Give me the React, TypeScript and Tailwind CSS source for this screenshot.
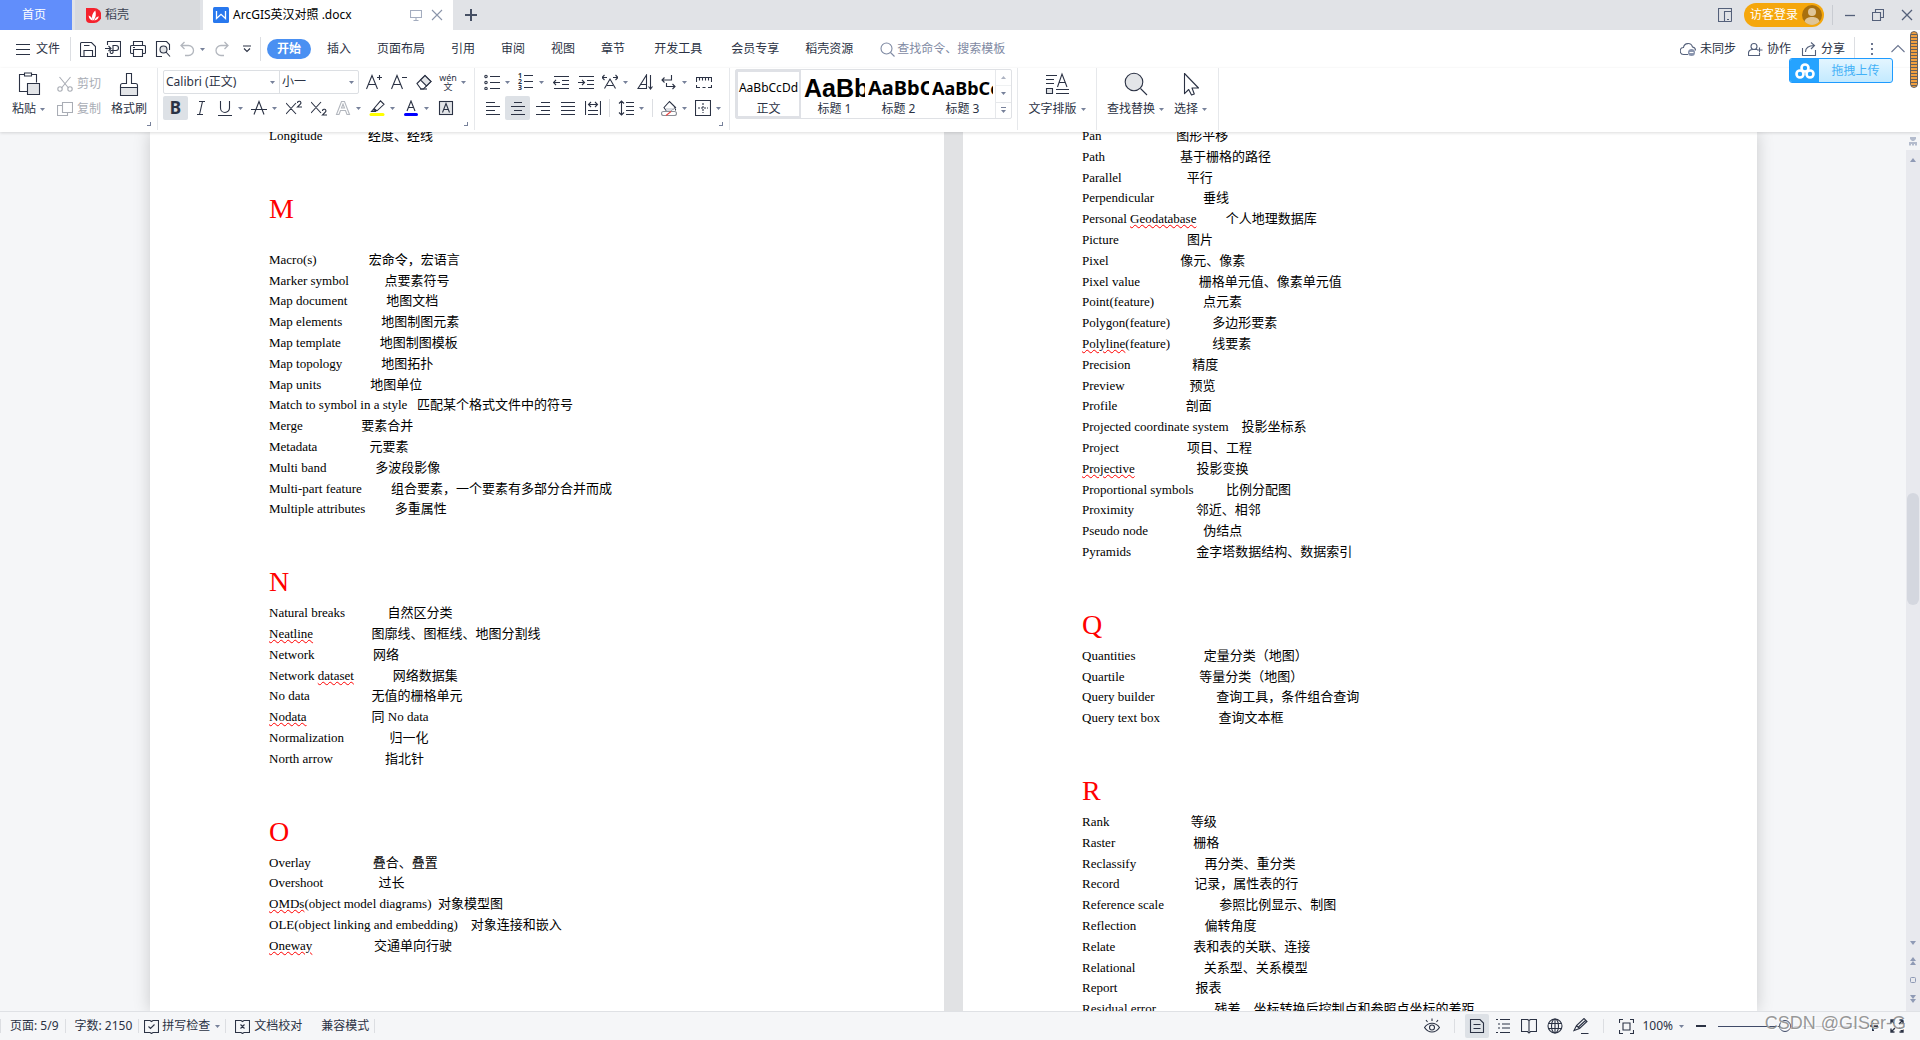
import React from "react";

type Entry = { term: string; gap: number; def: string; typo?: string };
type Section = { letter?: string; spaced?: boolean; entries: Entry[] };

const e = (term: string, gap: number, def: string, typo?: string): Entry => ({ term, gap, def, typo });

const leftPage: Section[] = [
  { entries: [e("Longitude", 14, "经度、经线")] },
  {
    letter: "M",
    spaced: true,
    entries: [
      e("Macro(s)", 16, "宏命令，宏语言"),
      e("Marker symbol", 11, "点要素符号"),
      e("Map document", 12, "地图文档"),
      e("Map elements", 12, "地图制图元素"),
      e("Map template", 12, "地图制图模板"),
      e("Map topology", 12, "地图拓扑"),
      e("Map units", 15, "地图单位"),
      e("Match to symbol in a style", 3, "匹配某个格式文件中的符号"),
      e("Merge", 18, "要素合并"),
      e("Metadata", 16, "元要素"),
      e("Multi band", 15, "多波段影像"),
      e("Multi-part feature", 9, "组合要素，一个要素有多部分合并而成"),
      e("Multiple attributes", 9, "多重属性"),
    ],
  },
  {
    letter: "N",
    entries: [
      e("Natural breaks", 13, "自然区分类"),
      e("Neatline", 18, "图廓线、图框线、地图分割线", "Neatline"),
      e("Network", 18, "网络"),
      e("Network dataset", 12, "网络数据集", "dataset"),
      e("No data", 19, "无值的栅格单元"),
      e("Nodata", 20, "同 No data", "Nodata"),
      e("Normalization", 14, "归一化"),
      e("North arrow", 16, "指北针"),
    ],
  },
  {
    letter: "O",
    entries: [
      e("Overlay", 19, "叠合、叠置"),
      e("Overshoot", 17, "过长"),
      e("OMDs(object model diagrams)", 2, "对象模型图", "OMDs"),
      e("OLE(object linking and embedding)", 4, "对象连接和嵌入"),
      e("Oneway", 19, "交通单向行驶", "Oneway"),
    ],
  },
];

const rightPage: Section[] = [
  {
    entries: [
      e("Pan", 23, "图形平移"),
      e("Path", 23, "基于栅格的路径"),
      e("Parallel", 20, "平行"),
      e("Perpendicular", 15, "垂线"),
      e("Personal Geodatabase", 9, "个人地理数据库", "Geodatabase"),
      e("Picture", 21, "图片"),
      e("Pixel", 22, "像元、像素"),
      e("Pixel value", 18, "栅格单元值、像素单元值"),
      e("Point(feature)", 15, "点元素"),
      e("Polygon(feature)", 13, "多边形要素"),
      e("Polyline(feature)", 13, "线要素", "Polyline"),
      e("Precision", 19, "精度"),
      e("Preview", 20, "预览"),
      e("Profile", 21, "剖面"),
      e("Projected coordinate system", 4, "投影坐标系"),
      e("Project", 21, "项目、工程"),
      e("Projective", 19, "投影变换", "Projective"),
      e("Proportional symbols", 10, "比例分配图"),
      e("Proximity", 19, "邻近、相邻"),
      e("Pseudo node", 17, "伪结点"),
      e("Pyramids", 20, "金字塔数据结构、数据索引"),
    ],
  },
  {
    letter: "Q",
    entries: [
      e("Quantities", 21, "定量分类（地图）"),
      e("Quartile", 23, "等量分类（地图）"),
      e("Query builder", 19, "查询工具，条件组合查询"),
      e("Query text box", 18, "查询文本框"),
    ],
  },
  {
    letter: "R",
    entries: [
      e("Rank", 25, "等级"),
      e("Raster", 24, "栅格"),
      e("Reclassify", 21, "再分类、重分类"),
      e("Record", 23, "记录，属性表的行"),
      e("Reference scale", 17, "参照比例显示、制图"),
      e("Reflection", 21, "偏转角度"),
      e("Relate", 24, "表和表的关联、连接"),
      e("Relational", 21, "关系型、关系模型"),
      e("Report", 24, "报表"),
      e("Residual error", 18, "残差，坐标转换后控制点和参照点坐标的差距"),
    ],
  },
];

function Icon({
  size = 18,
  className = "",
  children,
}: {
  size?: number;
  className?: string;
  children: React.ReactNode;
}) {
  return (
    <svg
      width={size}
      height={size}
      viewBox={`0 0 ${size} ${size}`}
      fill="none"
      stroke="currentColor"
      strokeWidth="1.1"
      aria-hidden="true"
      className={`shrink-0 ${className}`}
    >
      {children}
    </svg>
  );
}

function Caret() {
  return (
    <svg width="5" height="3" viewBox="0 0 5 3" aria-hidden="true" className="shrink-0 fill-[#77819a]">
      <path d="M0 0h5L2.500 3z" />
    </svg>
  );
}

function Tool({
  label,
  active,
  caret,
  muted,
  children,
}: {
  label: string;
  active?: boolean;
  caret?: boolean;
  muted?: boolean;
  children: React.ReactNode;
}) {
  return (
    <button
      aria-label={label}
      className={`flex h-6 items-center ${caret ? "w-[34px] pl-[2px]" : "w-[25px] justify-center"} ${
        active ? "rounded-[2px] bg-[#dde1e6]" : ""
      } ${muted ? "text-[#b3b7be]" : ""}`}
    >
      <span className="relative flex w-5 shrink-0 justify-center">{children}</span>
      {caret && (
        <span className="flex w-[10px] justify-center">
          <Caret />
        </span>
      )}
    </button>
  );
}

function Launcher() {
  return (
    <button aria-label="更多设置" className="absolute right-[6px] bottom-1 h-1 w-1 border-r border-b border-[#77819a]" />
  );
}

function BigTool({ label, caret, children, className = "" }: { label: string; caret?: boolean; children: React.ReactNode; className?: string }) {
  return (
    <button className={`flex flex-col items-center ${className}`}>
      <span className="flex h-[26px] items-center">{children}</span>
      <span className="mt-[2px] flex h-5 items-center gap-1">
        {label}
        {caret && <Caret />}
      </span>
    </button>
  );
}

function TitleBar() {
  return (
    <header className="flex h-[30px] shrink-0 items-stretch bg-[#e1e3e7]">
      <button className="w-[72px] bg-[#618efb] pr-1 text-white">首页</button>
      <button className="ml-[3px] flex w-[125px] items-center gap-1 bg-[#d8dadd] pl-[11px] text-[#3b4252]">
        <svg width="15" height="15" viewBox="0 0 15 15" aria-hidden="true">
          <path d="M0 0h8a7.500 7.500 0 0 1 0 15H4a4 4 0 0 1-4-4z" fill="#f5222d" />
          <path d="M7.500 12.500C5 10.500 5.800 5.500 9.300 2.600c1 3.500.8 7-1.800 9.900zM6.800 12.500c-2.300-.3-4-2-4.200-5 2.200.7 3.700 2.500 4.200 5zM8.300 12.500c.6-2 1.800-3.500 4.400-4.300-.2 2.500-1.900 4-4.400 4.300z" fill="#fff" />
        </svg>
        稻壳
      </button>
      <div className="ml-[3px] flex w-[250px] items-center bg-white pl-[10px]">
        <svg width="16" height="16" viewBox="0 0 16 16" aria-hidden="true">
          <rect width="16" height="16" rx="1.500" fill="#2878ee" />
          <path d="M3.500 4v7.500L8 7.300l4.500 4.200V4" fill="none" stroke="#fff" strokeWidth="1.300" />
        </svg>
        <span className="ml-1 text-black">ArcGIS英汉对照 .docx</span>
        <button aria-label="演示" className="ml-auto text-[#a4adbf]">
          <Icon size={12}>
            <path d="M.5 1.500h11v7H.5zM6 8.500v2.500M3.500 11.500h5" />
          </Icon>
        </button>
        <button aria-label="关闭标签" className="mr-[10px] ml-[9px] text-[#8b95aa]">
          <Icon size={12}>
            <path d="M1 1l10 10M11 1L1 11" />
          </Icon>
        </button>
      </div>
      <button aria-label="新建标签" className="ml-3 text-[#465064]">
        <Icon size={12}>
          <path d="M6 0v12M0 6h12" strokeWidth="2" />
        </Icon>
      </button>
      <div className="ml-auto flex items-center text-[#54607a]">
        <button aria-label="侧栏">
          <Icon size={14}>
            <path d="M6.500 13.500h-6V.5h13v13M6.500 3.500h7M6.500 3v10.500h7M9 11.500h2" />
          </Icon>
        </button>
        <button className="ml-3 flex h-6 w-20 items-center rounded-full bg-[#f5a70c] pl-[6px] text-white">
          访客登录
          <svg width="20" height="20" viewBox="0 0 20 20" className="ml-1" aria-hidden="true">
            <circle cx="10" cy="10" r="10" fill="#a8700e" />
            <circle cx="10" cy="7" r="4" fill="#dfc597" />
            <path d="M2.500 16.500c1-3.500 4-4.500 7.500-4.500s6.500 1 7.500 4.500A10 10 0 0 1 10 20a10 10 0 0 1-7.500-3.500z" fill="#dfc597" />
          </svg>
        </button>
        <span className="ml-2 h-5 w-px bg-[#c9ccd2]" />
        <button aria-label="最小化" className="ml-3">
          <Icon size={10}>
            <path d="M0 5.500h10" strokeWidth="1.300" />
          </Icon>
        </button>
        <button aria-label="还原" className="ml-[17px]">
          <Icon size={12}>
            <path d="M.5 3.500h8v8h-8zM3.500 3.500v-3h8v8h-3" />
          </Icon>
        </button>
        <button aria-label="关闭" className="mr-[7px] ml-[17px]">
          <Icon size={12}>
            <path d="M1 1l10 10M11 1L1 11" strokeWidth="1.300" />
          </Icon>
        </button>
      </div>
    </header>
  );
}

function MenuRow() {
  return (
    <div className="flex h-[38px] shrink-0 items-center bg-white pl-4">
      <button className="flex items-center gap-[6px]">
        <Icon size={14}>
          <path d="M0 2.500h14M0 7.500h14M0 12.500h14" />
        </Icon>
        文件
      </button>
      <span className="ml-[10px] h-6 w-px bg-[#dcdee2]" />
      <div className="flex items-center pl-1">
        <Tool label="保存">
          <Icon size={16}>
            <path d="M.5 2.500v13h15V5.500l-4-4h-10a1 1 0 0 0-1 1zM4 15.500v-6h8.500v6M4 4.500h5.500" />
          </Icon>
        </Tool>
        <Tool label="输出为PDF">
          <Icon size={16}>
            <path d="M2.500 4V.5h13v15h-13V12M0 7.500h5.500M3.500 5l2.500 2.500L3.500 10M8 12V4.500h3a2 2 0 0 1 0 5H6.500a1.500 1.500 0 1 0 1.500 2" />
          </Icon>
        </Tool>
        <Tool label="打印">
          <Icon size={16}>
            <path d="M3.500 4.500v-4h9v4M3.500 12.500h-2a1 1 0 0 1-1-1v-6a1 1 0 0 1 1-1h13a1 1 0 0 1 1 1v6a1 1 0 0 1-1 1h-2M3.500 8.500h9v7h-9zM3 6.500h2" />
          </Icon>
        </Tool>
        <Tool label="打印预览">
          <Icon size={16}>
            <path d="M7 15.500H1.500V.5h10l3 3V9" />
            <circle cx="8.500" cy="8.500" r="3.500" fill="#e3e5e8" />
            <path d="M11 11l4 4.500" />
          </Icon>
        </Tool>
        <Tool label="撤销" caret muted>
          <Icon size={16}>
            <path d="M5.500 1L2 4.500 5.500 8M2 4.500h7.500a5 5 0 0 1 0 10H6" strokeWidth="1.300" />
          </Icon>
        </Tool>
        <Tool label="恢复" muted>
          <Icon size={16}>
            <path d="M10.500 1L14 4.500 10.500 8M14 4.500H7a5 5 0 0 0 0 10h3" strokeWidth="1.300" />
          </Icon>
        </Tool>
        <Tool label="自定义快速访问工具栏">
          <Icon size={8}>
            <path d="M0 1h8M1 3.500l3 3 3-3" />
          </Icon>
        </Tool>
      </div>
      <span className="ml-px h-6 w-px bg-[#dcdee2]" />
      <nav className="flex items-center pl-[6px]">
        <button className="h-5 rounded-full bg-[#4a90f2] px-[10px] font-bold text-white">开始</button>
        {["插入", "页面布局", "引用", "审阅", "视图", "章节"].map((t) => (
          <button key={t} className="px-[13px] nth-2:pl-4">
            {t}
          </button>
        ))}
        {["开发工具", "会员专享"].map((t) => (
          <button key={t} className="pr-[13px] pl-4">
            {t}
          </button>
        ))}
        <button className="px-[13px]">稻壳资源</button>
      </nav>
      <label className="ml-[14px] flex items-center gap-[2px] text-[#7f8aa3]">
        <Icon size={15}>
          <circle cx="6.500" cy="6.500" r="5.500" />
          <path d="M10.500 10.500l4 4" />
        </Icon>
        <input
          aria-label="查找命令、搜索模板"
          placeholder="查找命令、搜索模板"
          className="w-[120px] bg-transparent outline-none placeholder:text-[#7f8aa3]"
        />
      </label>
      <div className="ml-auto flex items-center">
        <button className="flex items-center gap-1">
          <Icon size={16} className="text-[#54607a]">
            <path d="M8 13.500H4a3.500 3.500 0 0 1-.5-7 4.600 4.600 0 0 1 9-.5 3.500 3.500 0 0 1 3 3.500" />
            <circle cx="11.500" cy="11.500" r="3.500" fill="#8893ad" stroke="none" />
            <path d="M9.500 11.500h4" stroke="#fff" />
          </Icon>
          未同步
        </button>
        <button className="ml-3 flex items-center gap-1">
          <Icon size={15} className="text-[#54607a]">
            <circle cx="6" cy="4.500" r="3" />
            <path d="M9.500 7.500H5c-3 0-4.500 1.500-4.500 3.500v2.500h11V11M9 8h5.500M11.500 5.500v5" />
          </Icon>
          协作
        </button>
        <button className="ml-[10px] flex items-center gap-1">
          <Icon size={16} className="text-[#54607a]">
            <path d="M1.500 7v7.500h13V9M4.500 11c0-4 3-6.500 8.500-6.500M10 1.500l3.500 3L10 8" />
          </Icon>
          分享
        </button>
        <span className="ml-[9px] h-6 w-px bg-[#dcdee2]" />
        <button aria-label="更多" className="ml-4 grid gap-[3px]">
          <i className="size-[2px] bg-[#6b7690]" />
          <i className="size-[2px] bg-[#6b7690]" />
          <i className="size-[2px] bg-[#6b7690]" />
        </button>
        <button aria-label="收起功能区" className="mr-[15px] ml-[18px] text-[#6b7690]">
          <Icon size={14}>
            <path d="M.5 10L7 3.500l6.500 6.500" />
          </Icon>
        </button>
      </div>
    </div>
  );
}

function FontGroup() {
  return (
    <div className="relative h-[62px] w-[317px] border-r border-[#e6e8eb] pl-[5px]">
      <div className="flex h-7 items-center">
        <div className="mr-[2px] flex h-6 rounded-[2px] border border-[#dcdfe3]">
          <div className="relative flex w-[115px] items-center">
            <select aria-label="字体" className="w-full appearance-none bg-transparent pl-[2px] outline-none">
              <option>Calibri (正文)</option>
            </select>
            <span className="pointer-events-none absolute right-1">
              <Caret />
            </span>
          </div>
          <div className="relative flex w-[79px] items-center border-l border-[#dcdfe3]">
            <select aria-label="字号" className="w-full appearance-none bg-transparent pl-[2px] outline-none">
              <option>小一</option>
            </select>
            <span className="pointer-events-none absolute right-1">
              <Caret />
            </span>
          </div>
        </div>
        <Tool label="增大字号">
          <Icon size={16}>
            <path d="M.5 15L6 1.500 11.500 15M2.500 10.500h7M11 3.500h5M13.500 1v5" />
          </Icon>
        </Tool>
        <Tool label="减小字号">
          <Icon size={16}>
            <path d="M.5 15L6 1.500 11.500 15M2.500 10.500h7M11 3.500h5" />
          </Icon>
        </Tool>
        <Tool label="清除格式">
          <Icon size={16}>
            <path d="M1 9.500l8-8 6 6-7.500 7.500H5z" />
            <path d="M4.500 6L9 1.500l6 6-4.500 4.500z" fill="#e3e5e8" />
            <path d="M4 15h7" />
          </Icon>
        </Tool>
        <Tool label="拼音指南" caret>
          <span className="flex flex-col items-center text-[9px] leading-[9px]">
            <span>wén</span>
            <span>文</span>
          </span>
        </Tool>
      </div>
      <div className="flex h-6 items-center">
        <Tool label="加粗" active>
          <b className="text-[17px] leading-5">B</b>
        </Tool>
        <Tool label="倾斜">
          <Icon size={16}>
            <path d="M6 1.500h6M4 14.500h6M9.500 1.500l-3 13" />
          </Icon>
        </Tool>
        <Tool label="下划线" caret>
          <Icon size={16}>
            <path d="M3.500 1v7a4.500 4.500 0 0 0 9 0V1M1 15.500h14" />
          </Icon>
        </Tool>
        <Tool label="删除线" caret>
          <Icon size={16}>
            <path d="M3 14.500L8 1.500l5 13M0 9.500h16" />
          </Icon>
        </Tool>
        <Tool label="上标">
          <Icon size={16}>
            <path d="M0 3l10 11M10 3L0 14M11.500 3a1.700 1.700 0 1 1 3 1L11.500 7H16" />
          </Icon>
        </Tool>
        <Tool label="下标">
          <Icon size={16}>
            <path d="M0 2l10 11M10 2L0 13M11.500 11a1.700 1.700 0 1 1 3 1L11.500 15H16" />
          </Icon>
        </Tool>
        <Tool label="文字效果" caret muted>
          <Icon size={16}>
            <path d="M1.500 14.500l5-13h3l5 13H12l-1.500-4h-5l-1.500 4zM6.500 8h3L8 4z" />
          </Icon>
        </Tool>
        <Tool label="突出显示" caret>
          <Icon size={16}>
            <path d="M5 8.500L11.500.8l3.500 3.500-7 6.500H5zM5 8.500L2.500 11.500H7M5 8.500l3 2.500" />
            <path d="M2 14.500h12" stroke="#ffff00" strokeWidth="3" strokeLinecap="round" />
          </Icon>
        </Tool>
        <Tool label="字体颜色" caret>
          <Icon size={16}>
            <path d="M4 11L8 1l4 10M5.500 7.500h5" />
            <path d="M2.500 14.500h11" stroke="#0000ff" strokeWidth="3" strokeLinecap="round" />
          </Icon>
        </Tool>
        <Tool label="字符底纹">
          <Icon size={16}>
            <rect x="1.500" y="1.500" width="13" height="13" fill="#e3e5e8" />
            <path d="M4.500 12.500L8 3.500l3.500 9M5.800 9.500h4.500" />
          </Icon>
        </Tool>
      </div>
      <Launcher />
    </div>
  );
}

function ParagraphGroup() {
  return (
    <div className="relative h-[62px] w-[255px] border-r border-[#e6e8eb] pl-[5px]">
      <div className="flex h-7 items-center">
        <Tool label="项目符号" caret>
          <Icon size={16}>
            <path d="M6 2.500h10M6 8.500h10M6 14.500h10" />
            <circle cx="2" cy="2.500" r="1.200" />
            <circle cx="2" cy="8.500" r="1.200" />
            <circle cx="2" cy="14.500" r="1.200" />
          </Icon>
        </Tool>
        <Tool label="编号" caret>
          <span className="flex flex-col text-[7px] leading-[6px] font-bold">
            <span>1</span>
            <span>2</span>
            <span>3</span>
          </span>
          <Icon size={16} className="-ml-1">
            <path d="M6 2.500h9M6 8.500h9M6 14.500h9" />
          </Icon>
        </Tool>
        <Tool label="减少缩进量">
          <Icon size={16}>
            <path d="M1 2.500h15M9 6.500h7M9 10.500h7M1 14.500h15M.5 8.500H7M3 6L.5 8.500 3 11" />
          </Icon>
        </Tool>
        <Tool label="增加缩进量">
          <Icon size={16}>
            <path d="M1 2.500h15M9 6.500h7M9 10.500h7M1 14.500h15M0 8.500h6.500M4 6l2.500 2.500L4 11" />
          </Icon>
        </Tool>
        <Tool label="中文版式" caret>
          <Icon size={16}>
            <path d="M0 3.500h5M2.500 1L0 3.500 2.500 6M11 3.500h5M13.500 1L16 3.500 13.500 6M2.500 14.500L8 5l5.500 9.500M5 11.500h6" />
          </Icon>
        </Tool>
        <Tool label="排序">
          <Icon size={16}>
            <path d="M1 14.500L9.500 1v13.500zM4 10.500h5.500M13.500 1v14M11.500 12.500l2 2.500 2-2.500" />
          </Icon>
        </Tool>
        <Tool label="显示编辑标记" caret>
          <Icon size={16}>
            <path d="M10.500 1v5H1M3.500 3.500L1 6l2.500 2.500M5.500 9v3.500H14M11.500 10l2.500 2.500-2.500 2.500" />
          </Icon>
        </Tool>
        <Tool label="制表位">
          <Icon size={16}>
            <path d="M.5 8V3.500h15V8M3.500 3.500v3M6.500 3.500v3M9.500 3.500v3M12.500 3.500v3M.5 11v2.500H4M6.500 13.500h3M12 13.500h3.500V11" />
          </Icon>
        </Tool>
      </div>
      <div className="flex h-6 items-center">
        <Tool label="左对齐">
          <Icon size={16}>
            <path d="M1 2.500h9M1 6.500h14M1 10.500h9M1 14.500h14" />
          </Icon>
        </Tool>
        <Tool label="居中对齐" active>
          <Icon size={16}>
            <path d="M4 2.500h8M1 6.500h14M4 10.500h8M1 14.500h14" />
          </Icon>
        </Tool>
        <Tool label="右对齐">
          <Icon size={16}>
            <path d="M6 2.500h9M1 6.500h14M6 10.500h9M1 14.500h14" />
          </Icon>
        </Tool>
        <Tool label="两端对齐">
          <Icon size={16}>
            <path d="M1 2.500h14M1 6.500h14M1 10.500h14M1 14.500h14" />
          </Icon>
        </Tool>
        <Tool label="分散对齐">
          <Icon size={16}>
            <path d="M.5 1v14M15.500 1v14M3 10.500h10M3 14.500h10M3.500 4.500h9M6 2L3.500 4.500 6 7M10 2l2.500 2.500L10 7" />
          </Icon>
        </Tool>
        <span className="mx-1 h-[18px] w-px bg-[#dcdee2]" />
        <Tool label="行距" caret>
          <Icon size={16}>
            <path d="M3.500 1v14M1 3.500L3.500 1 6 3.500M1 12.500L3.500 15 6 12.500M8 2.500h8M8 6.500h8M8 10.500h8M8 14.500h8" />
          </Icon>
        </Tool>
        <span className="mx-1 h-[18px] w-px bg-[#dcdee2]" />
        <Tool label="底纹" caret>
          <Icon size={16}>
            <path d="M3 7.500L8.500 1.500l6 6L9 11H5.500z" />
            <path d="M4 8h10l-5 3.500H6z" fill="#d9dce1" stroke="none" />
            <path d="M14.500 8.500v2" />
            <rect x=".5" y="11.500" width="15" height="4" rx="2" stroke="#8b8f97" />
            <path d="M5 15.500l5-4" stroke="#e8423f" />
          </Icon>
        </Tool>
        <Tool label="边框" caret>
          <Icon size={16}>
            <path d="M.5.5h15v15H.5z" />
            <path d="M8 3v10M3 8h10" strokeDasharray="2 1" />
          </Icon>
        </Tool>
      </div>
      <Launcher />
    </div>
  );
}

function StyleSample({ name, sampleClass, sample }: { name: string; sampleClass: string; sample: string }) {
  return (
    <button className="flex w-16 flex-col items-center pt-[5px] pl-[3px]">
      <span className={`h-[26px] w-full overflow-hidden text-left leading-[26px] font-bold text-black ${sampleClass}`}>{sample}</span>
      <span className="leading-4">{name}</span>
    </button>
  );
}

function StylesGroup() {
  return (
    <div className="h-[62px] w-[288px] border-r border-[#e6e8eb] pt-[1px] pl-[5px]">
      <div className="flex h-[50px] w-[277px] rounded-[2px] border border-[#dfe1e5]">
        <button className="flex w-[65px] flex-col items-center border-2 border-[#dfe1e6] pt-[3px]">
          <span className="h-[26px] text-[12px] leading-[26px] whitespace-nowrap text-black">AaBbCcDd</span>
          <span className="leading-4">正文</span>
        </button>
        <StyleSample name="标题 1" sample="AaBb" sampleClass="font-['Liberation_Sans'] text-[25px]" />
        <StyleSample name="标题 2" sample="AaBbC" sampleClass="text-[20px]" />
        <StyleSample name="标题 3" sample="AaBbCc" sampleClass="text-[18px]" />
        <div className="ml-auto flex w-4 flex-col divide-y divide-[#e6e8eb] border-l border-[#e6e8eb]">
          <button aria-label="上一行" className="flex flex-1 items-center justify-center opacity-60">
            <span className="rotate-180">
              <Caret />
            </span>
          </button>
          <button aria-label="下一行" className="flex flex-1 items-center justify-center">
            <Caret />
          </button>
          <button aria-label="更多样式" className="flex flex-1 flex-col items-center justify-center gap-[2px]">
            <i className="h-px w-[5px] bg-[#77819a]" />
            <Caret />
          </button>
        </div>
      </div>
    </div>
  );
}

function Ribbon() {
  return (
    <div className="relative z-10 flex h-16 shrink-0 bg-white shadow-[0_1px_3px_rgba(0,0,0,0.14)]">
      <div className="relative flex h-[62px] w-[158px] border-r border-[#e6e8eb] pt-[3px] pl-3">
        <BigTool label="粘贴" caret>
          <Icon size={24}>
            <path d="M7.500 2.500h-5v17h8M14.500 2.500h5v8M7.500 1h7v3h-7z" />
            <path d="M10.500 11.500h12v11h-12z" fill="#e3e5e8" />
          </Icon>
        </BigTool>
        <div className="ml-3 flex flex-col text-[#a9adb5]">
          <button className="flex h-[25px] items-center gap-1">
            <Icon size={16}>
              <path d="M2.500 1l9 11M13.500 1l-9 11" />
              <circle cx="3" cy="13" r="2.200" />
              <circle cx="13" cy="13" r="2.200" />
            </Icon>
            剪切
          </button>
          <button className="flex h-[26px] items-center gap-1">
            <Icon size={16}>
              <path d="M5.500 1.500h10v10h-10zM5.500 4.500h-5v10h10v-3" />
            </Icon>
            复制
          </button>
        </div>
        <BigTool label="格式刷" className="ml-[10px]">
          <Icon size={24}>
            <path d="M3.500 15.500v-2a2 2 0 0 1 2-2H9.500v-10h5v10h4a2 2 0 0 1 2 2v2" />
            <path d="M3.500 15.500h17v8h-17z" fill="#e3e5e8" />
          </Icon>
        </BigTool>
        <Launcher />
      </div>
      <FontGroup />
      <ParagraphGroup />
      <StylesGroup />
      <div className="flex h-[62px] w-[79px] justify-center border-r border-[#e6e8eb] pt-[3px]">
        <BigTool label="文字排版" caret>
          <Icon size={24}>
            <path d="M1 3.500h11M1 7.500h8M1 11.500h8M12.500 15L17 2l5 13M14 10.500h6.500M11 17.500h13M11 21.500h13" />
            <path d="M1.500 16.500h6v5h-6z" fill="#e3e5e8" />
          </Icon>
        </BigTool>
      </div>
      <div className="flex h-[62px] w-[122px] gap-[10px] border-r border-[#e6e8eb] pt-[3px] pl-[10px]">
        <BigTool label="查找替换" caret>
          <Icon size={24}>
            <circle cx="10" cy="10" r="8.800" fill="#e3e5e8" />
            <path d="M16.500 16.500l6.500 6.500" />
          </Icon>
        </BigTool>
        <BigTool label="选择" caret>
          <Icon size={24}>
            <path d="M5.500 1.500v20.200l4.200-4.200 2.800 5.500 2.800-1-2.300-6h6.500z" strokeLinejoin="round" />
          </Icon>
        </BigTool>
      </div>
    </div>
  );
}

function Term({ term, typo }: { term: string; typo?: string }) {
  if (!typo) return <>{term}</>;
  const [before, after] = term.split(typo);
  return (
    <>
      {before}
      <span className="underline decoration-[#ff0000] decoration-wavy decoration-1 underline-offset-1">{typo}</span>
      {after}
    </>
  );
}

function Page({ sections }: { sections: Section[] }) {
  return (
    <article className="w-[794px] overflow-hidden bg-white pr-[100px] pl-[119px] font-['Liberation_Serif','Noto_Sans_CJK_SC',serif] text-[13px] leading-[1.6] text-black">
      <div className="-mt-[6px]">
        {sections.map((s, i) => (
          <section key={i}>
            {s.letter && (
              <h2 className={`mt-[41px] text-[28px] leading-[42px] text-[#ff0000] ${s.spaced ? "mb-5" : ""}`}>{s.letter}</h2>
            )}
            {s.entries.map((it) => (
              <p key={it.term} className="whitespace-pre">
                <Term term={it.term} typo={it.typo} />
                {" ".repeat(it.gap)}
                {it.def}
              </p>
            ))}
          </section>
        ))}
      </div>
    </article>
  );
}

function ScrollBar() {
  return (
    <div className="flex w-[14px] shrink-0 flex-col items-center bg-[#e8e9ee] text-[#8f9ab5]">
      <div className="flex h-[18px] w-full justify-center bg-[#f5f6f8] pt-[5px] text-[#b4bccd]">
        <svg width="8" height="9" viewBox="0 0 8 9" fill="currentColor" aria-hidden="true">
          <path d="M1 0h6v2L5 4H3L1 2zM0 5h8v3.500H6V7H5v1.500H3V7H2v1.500H0z" />
        </svg>
      </div>
      <button aria-label="向上滚动" className="mt-2">
        <svg width="6" height="4" viewBox="0 0 6 4" fill="currentColor" aria-hidden="true">
          <path d="M0 4h6L3 0z" />
        </svg>
      </button>
      <div className="flex w-full flex-1 flex-col items-center">
        <div className="flex-[331]" />
        <div className="h-[112px] w-3 rounded-full bg-[#d4d7df]" />
        <div className="flex-[336]" />
      </div>
      <div className="flex flex-col items-center gap-3 pb-2">
        <button aria-label="向下滚动">
          <svg width="6" height="4" viewBox="0 0 6 4" fill="currentColor" aria-hidden="true">
            <path d="M0 0h6L3 4z" />
          </svg>
        </button>
        <button aria-label="上一页">
          <svg width="6" height="8" viewBox="0 0 6 8" fill="currentColor" aria-hidden="true">
            <path d="M0 4h6L3 0zM0 8h6L3 4z" />
          </svg>
        </button>
        <button aria-label="选择浏览对象">
          <svg width="6" height="6" viewBox="0 0 6 6" fill="none" stroke="currentColor" aria-hidden="true">
            <rect x=".5" y=".5" width="5" height="5" rx="1" />
          </svg>
        </button>
        <button aria-label="下一页">
          <svg width="6" height="8" viewBox="0 0 6 8" fill="currentColor" aria-hidden="true">
            <path d="M0 0h6L3 4zM0 4h6L3 8z" />
          </svg>
        </button>
      </div>
    </div>
  );
}

function Divider() {
  return <span className="h-[14px] w-px bg-[#dcdee2]" />;
}

function ViewButton({ label, active, children }: { label: string; active?: boolean; children: React.ReactNode }) {
  return (
    <button aria-label={label} className={`flex size-6 items-center justify-center rounded-[2px] ${active ? "bg-[#dde1e6]" : ""}`}>
      {children}
    </button>
  );
}

function StatusBar() {
  return (
    <footer className="relative flex h-[29px] shrink-0 items-center border-t border-[#dfe1e5] bg-[#f5f6f8]">
      <Divider />
      <span className="mr-[6px] ml-[9px]">页面: 5/9</span>
      <Divider />
      <span className="mr-[6px] ml-[9px]">字数: 2150</span>
      <Divider />
      <button className="mr-[5px] ml-[5px] flex items-center gap-[3px]">
        <Icon size={15}>
          <path d="M6 1.500H.5v12H6l1.500 1 1.500-1h5.500v-12H9l-1.500 1zM4.500 7.500l2 2 4-4" />
        </Icon>
        拼写检查
        <span className="ml-[2px]">
          <Caret />
        </span>
      </button>
      <Divider />
      <button className="ml-[9px] flex items-center gap-1">
        <Icon size={15}>
          <path d="M6 1.500H.5v12H6l1.500 1 1.500-1h5.500v-12H9l-1.500 1zM5.500 5.500l4 4M9.500 5.500l-4 4" />
        </Icon>
        文档校对
      </button>
      <button className="mr-[5px] ml-[19px]">兼容模式</button>
      <Divider />
      <div className="ml-auto flex items-center">
        <ViewButton label="护眼模式">
          <Icon size={16}>
            <path d="M.5 9.500C2.500 6.500 5 5.200 8 5.200s5.500 1.300 7.500 4.300c-2 3-4.500 4.500-7.500 4.500S2.500 12.500.5 9.500zM8 .5V3M2 2l1.500 2M14 2l-1.500 2" />
            <circle cx="8" cy="9.500" r="2.500" />
          </Icon>
        </ViewButton>
        <span className="mx-[10px] flex">
          <Divider />
        </span>
        <div className="flex gap-[2px]">
          <ViewButton label="页面视图" active>
            <Icon size={16}>
              <path d="M1.500 1.500h9.500l3.500 3.500v9.500h-13zM4.500 6.500h7M4.500 10.500h7" />
            </Icon>
          </ViewButton>
          <ViewButton label="大纲">
            <Icon size={16}>
              <path d="M1 1.500h2M5 1.500h10M3 6h2M7 6h8M3 10h2M7 10h8M1 14.500h2M5 14.500h10" />
            </Icon>
          </ViewButton>
          <ViewButton label="阅读版式">
            <Icon size={16}>
              <path d="M8 2.500v11M.5 1.500H6.500L8 2.500l1.500-1h6v12h-6L8 15l-1.500-1.500h-6z" />
            </Icon>
          </ViewButton>
          <ViewButton label="Web版式">
            <Icon size={16}>
              <circle cx="8" cy="8" r="7" />
              <ellipse cx="8" cy="8" rx="3.500" ry="7" />
              <path d="M8 1v14M1.500 5.500h13M1.500 10.500h13" />
            </Icon>
          </ViewButton>
          <ViewButton label="写作模式">
            <Icon size={16}>
              <path d="M1 12.500l2.500-5 7.500-7 3 3-7.500 7zM3.500 7.500l3 3M5.500 9L13 2M8 15.500h7.500" />
            </Icon>
          </ViewButton>
        </div>
        <span className="mx-[10px] flex">
          <Divider />
        </span>
        <ViewButton label="最佳显示比例">
          <Icon size={15}>
            <path d="M.5 4V.5H4M11 .5h3.500V4M14.500 11v3.500H11M4 14.500H.5V11M4 4h7v7H4z" />
          </Icon>
        </ViewButton>
        <button className="ml-1 flex items-center gap-[6px]">
          100%
          <Caret />
        </button>
        <button aria-label="缩小" className="ml-3">
          <Icon size={10}>
            <path d="M0 5h10" strokeWidth="2" />
          </Icon>
        </button>
        <input
          type="range"
          aria-label="显示比例"
          defaultValue={46}
          className="mx-3 h-3 w-[144px] appearance-none bg-[linear-gradient(to_right,#3f4a68_46%,#d3d6dd_46%)] bg-[length:100%_1px] bg-center bg-no-repeat [&::-webkit-slider-thumb]:size-3 [&::-webkit-slider-thumb]:appearance-none [&::-webkit-slider-thumb]:rounded-full [&::-webkit-slider-thumb]:border [&::-webkit-slider-thumb]:border-[#3f4a68] [&::-webkit-slider-thumb]:bg-[#f5f6f8]"
        />
        <button aria-label="放大" className="-ml-[6px]">
          <Icon size={10}>
            <path d="M0 5h10M5 0v10" strokeWidth="2" />
          </Icon>
        </button>
        <button aria-label="全屏显示" className="mr-4 ml-3">
          <Icon size={14}>
            <path d="M1 4.500V1h3.500M1 1l4 4M9.500 1H13v3.500M13 1L9 5M13 9.500V13H9.500M13 13L9 9M4.500 13H1V9.500M1 13l4-4" strokeWidth="1.400" />
          </Icon>
        </button>
      </div>
      <span className="pointer-events-none absolute -top-[3px] right-[14px] font-['Liberation_Sans'] text-[18px] leading-7 text-[#7d7d7d]/80 [text-shadow:1px_1px_0_#ffffff]">
        CSDN @GISer-G
      </span>
    </footer>
  );
}

export default function App() {
  return (
    <div
      lang="zh-CN"
      className="relative flex h-screen flex-col overflow-hidden bg-[#f5f6f8] font-['Noto_Sans','Noto_Sans_CJK_SC',sans-serif] text-[12px] leading-4 text-[#2b3244]"
    >
      <TitleBar />
      <MenuRow />
      <Ribbon />
      <main className="flex min-h-0 flex-1">
        <div className="flex min-w-0 flex-1 justify-center overflow-hidden pl-px">
          <div className="flex shrink-0 gap-[19px] bg-[#e1e2e4] shadow-[0_0_16px_rgba(0,0,0,0.18)]">
            <Page sections={leftPage} />
            <Page sections={rightPage} />
          </div>
        </div>
        <ScrollBar />
      </main>
      <StatusBar />
      <button className="absolute top-[58px] right-[27px] z-20 flex h-[25px] w-26 items-stretch overflow-hidden rounded-[3px] border border-[#1e9bff] bg-linear-to-b from-[#e3f5ff] to-[#c3eaff] text-[#43b1f7]">
        <span className="flex w-[29px] items-center justify-center bg-[#25a3ff]">
          <svg width="20" height="16" viewBox="0 0 20 16" fill="none" stroke="#fff" strokeWidth="2.600" aria-hidden="true">
            <circle cx="10" cy="5" r="3.500" />
            <circle cx="5" cy="11" r="3.500" />
            <circle cx="15" cy="11" r="3.500" />
          </svg>
        </span>
        <span className="flex flex-1 items-center justify-center">拖拽上传</span>
      </button>
      <div className="absolute top-[31px] right-[2px] z-20 h-[57px] w-2 rounded-full border border-[#66605c] bg-[repeating-linear-gradient(to_bottom,#f0a040_0_2px,#66605c_2px_3px)]" />
    </div>
  );
}
